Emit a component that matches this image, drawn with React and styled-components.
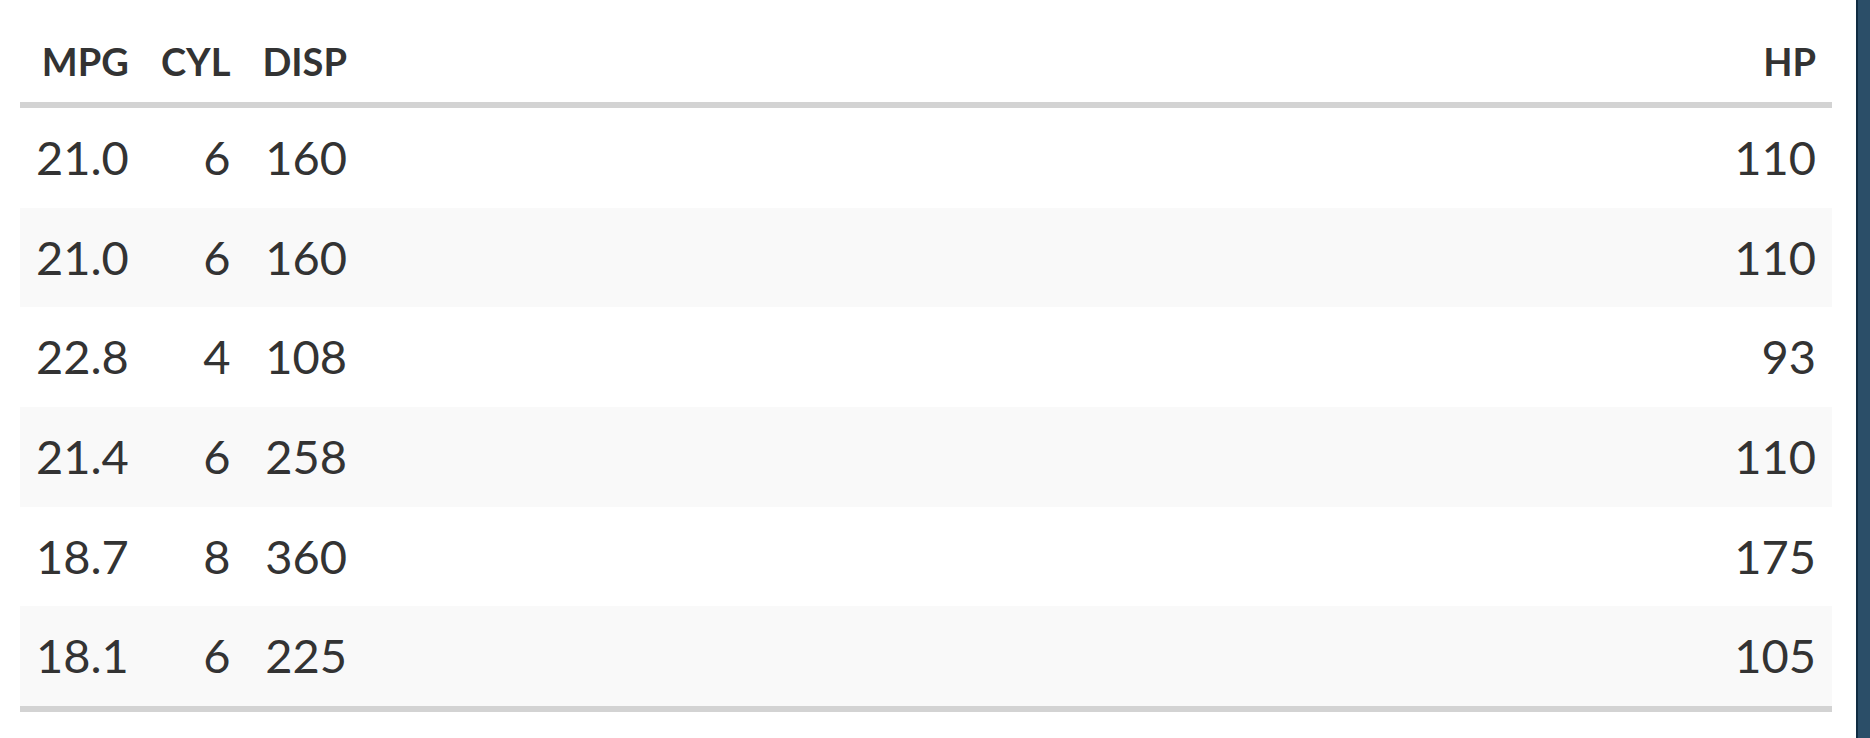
import React from "react";
import styled, { createGlobalStyle } from "styled-components";

const GlobalStyle = createGlobalStyle`
  *, *::before, *::after {
    box-sizing: border-box;
  }
  html, body {
    margin: 0;
    padding: 0;
    background: #ffffff;
  }
  body {
    font-family: Lato, "Noto Sans", sans-serif;
    color: #333333;
  }
`;

const Page = styled.div`
  display: flex;
  width: 100%;
  height: 738px;
  overflow: hidden;
`;

const Main = styled.div`
  flex: 1;
  min-width: 0;
  padding: 0 24px 0 20px;
`;

const Sidebar = styled.div`
  flex: 0 0 14px;
  background: #2b4e68;
  border-left: 2px solid #102c42;
`;

const Table = styled.table`
  width: 100%;
  border-collapse: collapse;
  border-bottom: 6px solid #d3d3d3;
  font-variant-numeric: lining-nums tabular-nums;
`;

const HeadCell = styled.th`
  width: ${({ $grow }) => ($grow ? "auto" : "1%")};
  white-space: nowrap;
  text-align: right;
  padding: 37px 16px 17px;
  font-size: 38px;
  font-weight: 700;
  line-height: 48px;
  color: #333333;
  border-bottom: 6px solid #d3d3d3;
`;

const Row = styled.tr`
  background: ${({ $striped }) => ($striped ? "#f9f9f9" : "#ffffff")};
`;

const Cell = styled.td`
  white-space: nowrap;
  text-align: right;
  padding: 21px 16px;
  height: 99.67px;
  font-size: 47px;
  font-weight: 400;
  line-height: 57.67px;
  color: #333333;
`;

const columns = [
  { key: "mpg", label: "MPG" },
  { key: "cyl", label: "CYL" },
  { key: "disp", label: "DISP" },
  { key: "hp", label: "HP", grow: true },
];

const cars = [
  { mpg: "21.0", cyl: 6, disp: 160, hp: 110 },
  { mpg: "21.0", cyl: 6, disp: 160, hp: 110 },
  { mpg: "22.8", cyl: 4, disp: 108, hp: 93 },
  { mpg: "21.4", cyl: 6, disp: 258, hp: 110 },
  { mpg: "18.7", cyl: 8, disp: 360, hp: 175 },
  { mpg: "18.1", cyl: 6, disp: 225, hp: 105 },
];

const App = () => {
  return (
    <>
      <GlobalStyle />
      <Page>
        <Main>
          <Table>
            <thead>
              <tr>
                {columns.map((col) => (
                  <HeadCell key={col.key} $grow={col.grow}>
                    {col.label}
                  </HeadCell>
                ))}
              </tr>
            </thead>
            <tbody>
              {cars.map((car, i) => (
                <Row key={i} $striped={i % 2 === 1}>
                  {columns.map((col) => (
                    <Cell key={col.key}>{car[col.key]}</Cell>
                  ))}
                </Row>
              ))}
            </tbody>
          </Table>
        </Main>
        <Sidebar />
      </Page>
    </>
  );
};

export default App;
